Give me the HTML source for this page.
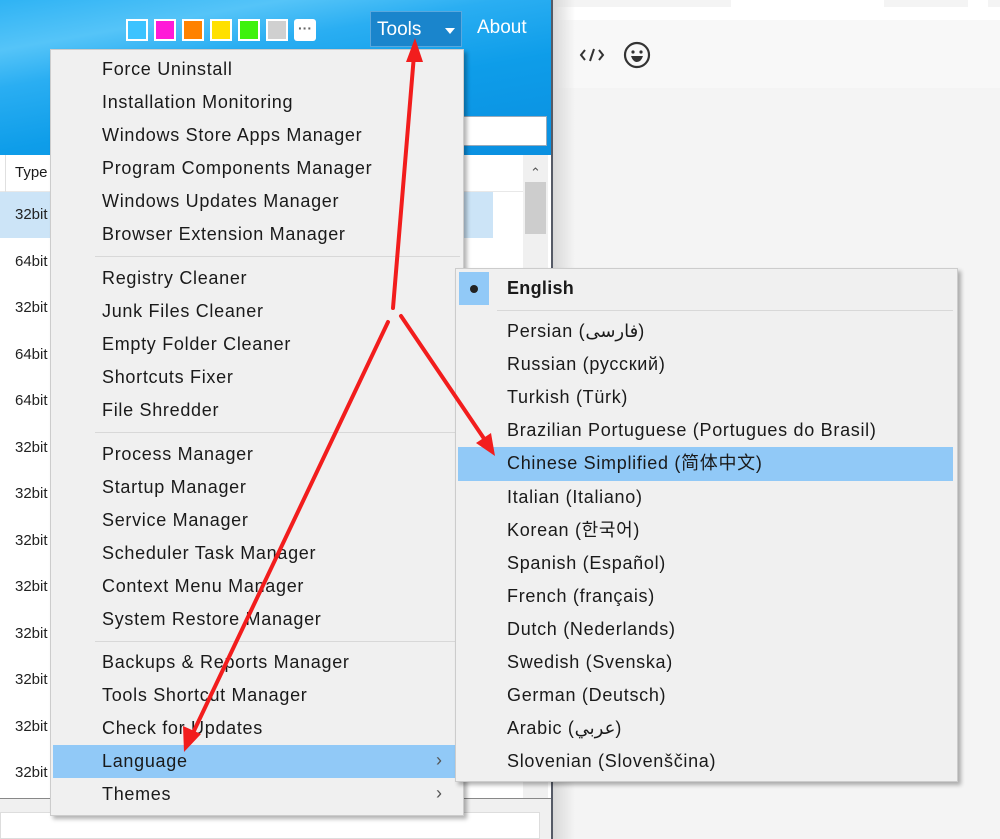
<!DOCTYPE html>
<html><head><meta charset="utf-8"><style>
*{margin:0;padding:0;box-sizing:border-box}
body{width:1000px;height:839px;position:relative;overflow:hidden;background:#f4f4f4;font-family:"Liberation Sans","Noto Sans CJK SC","DejaVu Sans",sans-serif;font-size:17px;color:#1a1a1a}
.a{position:absolute}
.it{position:absolute;height:33px;line-height:33px;white-space:nowrap;font-size:18px;letter-spacing:0.7px}
.it span{line-height:20px}
.sep{position:absolute;height:1px;background:#d8d8d8}
.row{position:absolute;left:0;width:48px;height:46px;line-height:46px;padding-left:15px;font-size:15px;color:#222;overflow:hidden}
</style></head><body>
<div class="a" style="left:553px;top:0;width:447px;height:20px;background:#fff"></div>
<div class="a" style="left:553px;top:0;width:178px;height:7px;background:#f4f4f4"></div>
<div class="a" style="left:884px;top:0;width:84px;height:7px;background:#f4f4f4"></div>
<div class="a" style="left:988px;top:0;width:12px;height:7px;background:#f4f4f4"></div>
<div class="a" style="left:553px;top:20px;width:447px;height:68px;background:#f8f8f8"></div>
<div class="a" style="left:553px;top:0;width:22px;height:839px;background:linear-gradient(90deg,#d8d8d8,rgba(244,244,244,0))"></div>
<svg class="a" style="left:578px;top:43px" width="28" height="24" viewBox="0 0 28 24"><path d="M7 7 L3 12 L7 17 M21 7 L25 12 L21 17 M16 6 L12 18" stroke="#333" stroke-width="2" fill="none"/></svg>
<svg class="a" style="left:622px;top:40px" width="30" height="30" viewBox="0 0 30 30"><circle cx="15" cy="15" r="12" stroke="#333" stroke-width="2.2" fill="none"/><circle cx="11" cy="12" r="1.6" fill="#333"/><circle cx="19" cy="12" r="1.6" fill="#333"/><path d="M9 16 H21 Q19 22 15 22 Q11 22 9 16Z" fill="#333"/></svg>

<div class="a" style="left:0;top:0;width:553px;height:839px;background:#fff;border-right:2px solid #555a66"></div>
<div class="a" style="left:0;top:0;width:551px;height:155px;background:linear-gradient(170deg,#2fb3f4 0%,#55c4f8 20%,#2aaef2 35%,#0e9de9 60%,#0a8fe0 100%)"></div>
<div class="a" style="left:455px;top:116px;width:92px;height:30px;background:#fff;border:1px solid #9ab"></div>
<div class="a" style="left:126px;top:19px;width:22px;height:22px;background:#3cc3ff;border:2px solid #fff"></div>
<div class="a" style="left:154px;top:19px;width:22px;height:22px;background:#ff19d8;border:2px solid #fff"></div>
<div class="a" style="left:182px;top:19px;width:22px;height:22px;background:#ff8200;border:2px solid #fff"></div>
<div class="a" style="left:210px;top:19px;width:22px;height:22px;background:#ffe000;border:2px solid #fff"></div>
<div class="a" style="left:238px;top:19px;width:22px;height:22px;background:#3ef20c;border:2px solid #fff"></div>
<div class="a" style="left:266px;top:19px;width:22px;height:22px;background:#d0d0d0;border:2px solid #fff"></div>
<div class="a" style="left:294px;top:19px;width:22px;height:22px;background:#fff;border-radius:3px;text-align:center;line-height:18px;font-size:14px;font-weight:bold;color:#666">···</div>
<div class="a" style="left:370px;top:11px;width:92px;height:36px;background:#1a85cc;border:1px solid #5aa8dd;color:#fff;font-size:19px;line-height:36px;padding-left:6px">Tools<span style="position:absolute;left:74px;top:16px;border:5px solid transparent;border-top:6px solid #fff"></span></div>
<div class="a" style="left:477px;top:17px;color:#fff;font-size:19px">About</div>

<div class="a" style="left:0;top:155px;width:523px;height:37px;border-bottom:1px solid #e8e8e8"></div>
<div class="a" style="left:5px;top:155px;width:1px;height:37px;background:#e0e0e0"></div>
<div class="a" style="left:15px;top:164px;font-size:15px">Type</div>
<div class="a" style="left:0;top:192px;width:493px;height:46px;background:#cce4f7"></div>
<div class="row" style="top:192px">32bit</div>
<div class="row" style="top:239px">64bit</div>
<div class="row" style="top:285px">32bit</div>
<div class="row" style="top:332px">64bit</div>
<div class="row" style="top:378px">64bit</div>
<div class="row" style="top:425px">32bit</div>
<div class="row" style="top:471px">32bit</div>
<div class="row" style="top:518px">32bit</div>
<div class="row" style="top:564px">32bit</div>
<div class="row" style="top:611px">32bit</div>
<div class="row" style="top:657px">32bit</div>
<div class="row" style="top:704px">32bit</div>
<div class="row" style="top:750px">32bit</div>
<div class="a" style="left:523px;top:155px;width:25px;height:643px;background:#f0f0f0"></div>
<div class="a" style="left:530px;top:165px;color:#555;font-size:13px">&#8963;</div>
<div class="a" style="left:525px;top:182px;width:21px;height:52px;background:#cdcdcd"></div>
<div class="a" style="left:0;top:798px;width:551px;height:41px;background:#f0f0f0;border-top:1px solid #888"></div>
<div class="a" style="left:0;top:812px;width:540px;height:27px;background:#fff;border:1px solid #ddd"></div>

<div class="a" style="left:50px;top:49px;width:414px;height:767px;background:#f0f0f0;border:1px solid #ccc;box-shadow:3px 3px 4px rgba(0,0,0,.3)"></div>
<div class="a" style="left:53px;top:745px;width:407px;height:33px;background:#91c9f7"></div>
<div class="sep" style="left:95px;top:256px;width:365px"></div>
<div class="sep" style="left:95px;top:432px;width:365px"></div>
<div class="sep" style="left:95px;top:641px;width:365px"></div>
<div class="it" style="left:102px;top:53px">Force Uninstall</div>
<div class="it" style="left:102px;top:86px">Installation Monitoring</div>
<div class="it" style="left:102px;top:119px">Windows Store Apps Manager</div>
<div class="it" style="left:102px;top:152px">Program Components Manager</div>
<div class="it" style="left:102px;top:185px">Windows Updates Manager</div>
<div class="it" style="left:102px;top:218px">Browser Extension Manager</div>
<div class="it" style="left:102px;top:262px">Registry Cleaner</div>
<div class="it" style="left:102px;top:295px">Junk Files Cleaner</div>
<div class="it" style="left:102px;top:328px">Empty Folder Cleaner</div>
<div class="it" style="left:102px;top:361px">Shortcuts Fixer</div>
<div class="it" style="left:102px;top:394px">File Shredder</div>
<div class="it" style="left:102px;top:438px">Process Manager</div>
<div class="it" style="left:102px;top:471px">Startup Manager</div>
<div class="it" style="left:102px;top:504px">Service Manager</div>
<div class="it" style="left:102px;top:537px">Scheduler Task Manager</div>
<div class="it" style="left:102px;top:570px">Context Menu Manager</div>
<div class="it" style="left:102px;top:603px">System Restore Manager</div>
<div class="it" style="left:102px;top:646px">Backups &amp; Reports Manager</div>
<div class="it" style="left:102px;top:679px">Tools Shortcut Manager</div>
<div class="it" style="left:102px;top:712px">Check for Updates</div>
<div class="it" style="left:102px;top:745px">Language</div>
<div class="it" style="left:102px;top:778px">Themes</div>
<div class="it" style="left:436px;top:744px;color:#555">›</div>
<div class="it" style="left:436px;top:777px;color:#555">›</div>

<div class="a" style="left:455px;top:268px;width:503px;height:514px;background:#f0f0f0;border:1px solid #ccc;box-shadow:3px 3px 4px rgba(0,0,0,.3)"></div>
<div class="a" style="left:459px;top:272px;width:30px;height:33px;background:#91c9f7"></div>
<div class="a" style="left:470px;top:285px;width:8px;height:8px;border-radius:50%;background:#222"></div>
<div class="sep" style="left:497px;top:310px;width:456px"></div>
<div class="a" style="left:458px;top:447px;width:495px;height:34px;background:#91c9f7"></div>
<div class="it" style="left:507px;top:272px;font-weight:bold;letter-spacing:0.3px">English</div>
<div class="it" style="left:507px;top:315px">Persian (فارسی)</div>
<div class="it" style="left:507px;top:348px">Russian (русский)</div>
<div class="it" style="left:507px;top:381px">Turkish (Türk)</div>
<div class="it" style="left:507px;top:414px">Brazilian Portuguese (Portugues do Brasil)</div>
<div class="it" style="left:507px;top:447px">Chinese Simplified (简体中文)</div>
<div class="it" style="left:507px;top:481px">Italian (Italiano)</div>
<div class="it" style="left:507px;top:514px">Korean (<span style="font-family:'Noto Sans CJK KR',sans-serif">한국어</span>)</div>
<div class="it" style="left:507px;top:547px">Spanish (Español)</div>
<div class="it" style="left:507px;top:580px">French (français)</div>
<div class="it" style="left:507px;top:613px">Dutch (Nederlands)</div>
<div class="it" style="left:507px;top:646px">Swedish (Svenska)</div>
<div class="it" style="left:507px;top:679px">German (Deutsch)</div>
<div class="it" style="left:507px;top:712px">Arabic (عربي)</div>
<div class="it" style="left:507px;top:745px">Slovenian (Slovenščina)</div>

<svg class="a" style="left:0;top:0" width="1000" height="839">
<g stroke="#f21d1d" stroke-width="4" fill="#f21d1d" stroke-linecap="round">
<line x1="393" y1="308" x2="414" y2="55"/>
<polygon points="415,38 406,62 423,62" stroke="none"/>
<line x1="388" y1="322" x2="192" y2="735"/>
<polygon points="184,752 183,726 201,734" stroke="none"/>
<line x1="401" y1="316" x2="485" y2="440"/>
<polygon points="495,456 476,443 491,433" stroke="none"/>
</g></svg>
</body></html>
